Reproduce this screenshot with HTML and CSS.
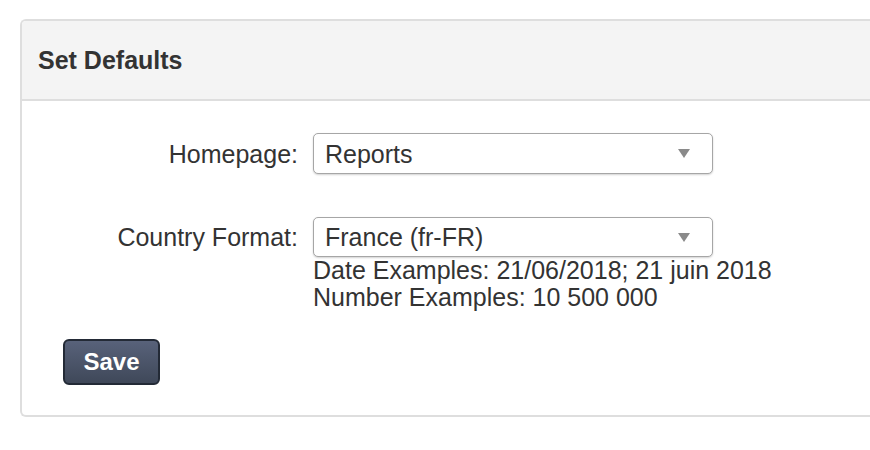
FILE: index.html
```html
<!DOCTYPE html>
<html lang="en">
<head>
<meta charset="utf-8">
<title>Set Defaults</title>
<link rel="stylesheet" href="styles.css">
</head>
<body>
<div class="panel">
  <div class="panel-header">Set Defaults</div>
  <div class="panel-body">
    <div class="field-row">
      <label class="field-label">Homepage:</label>
      <div class="select">
        <span class="select-value">Reports</span>
        <span class="select-arrow"></span>
      </div>
    </div>
    <div class="field-row field-row-spaced">
      <label class="field-label">Country Format:</label>
      <div class="select select-short">
        <span class="select-value">France (fr-FR)</span>
        <span class="select-arrow"></span>
      </div>
    </div>
    <div class="field-hint">
      <div>Date Examples: 21/06/2018; 21 juin 2018</div>
      <div>Number Examples: 10 500 000</div>
    </div>
    <button class="btn-save" type="button">Save</button>
  </div>
</div>
</body>
</html>
```

FILE: styles.css
```css
html, body {
  margin: 0;
  padding: 0;
  overflow: hidden;
  background: #ffffff;
}

body {
  font-family: "Liberation Sans", Arial, Helvetica, sans-serif;
  font-size: 25px;
  color: #333333;
  padding: 19px 0 0 20px;
}

.panel {
  border: 2px solid #dedede;
  border-right: 0;
  border-radius: 6px 0 0 6px;
  background: #ffffff;
}

.panel-header {
  height: 78px;
  display: flex;
  align-items: center;
  padding-left: 16px;
  background: #f4f4f4;
  border-bottom: 2px solid #dedede;
  border-top-left-radius: 4px;
  font-weight: bold;
  color: #333333;
}

.panel-body {
  padding: 32px 0 30px 0;
}

.field-row {
  display: grid;
  grid-template-columns: 276px 400px;
  column-gap: 15px;
  align-items: center;
}

.field-row-spaced {
  margin-top: 43px;
}

.field-label {
  text-align: right;
  line-height: 28px;
}

.select {
  box-sizing: border-box;
  height: 41px;
  display: flex;
  align-items: center;
  justify-content: space-between;
  padding: 0 22px 0 11px;
  border: 1px solid #a6a6a6;
  border-radius: 5px;
  box-shadow: 0 1px 2px rgba(0, 0, 0, 0.18);
  background: #ffffff;
}

.select-short {
  height: 40px;
}

.select-value {
  line-height: 28px;
  color: #333333;
}

.select-arrow {
  width: 0;
  height: 0;
  border-left: 6px solid transparent;
  border-right: 6px solid transparent;
  border-top: 9px solid #8a8a8a;
}

.field-hint {
  margin-left: 291px;
  line-height: 27px;
  color: #333333;
}

.btn-save {
  margin: 28px 0 0 41px;
  box-sizing: border-box;
  width: 97px;
  height: 46px;
  padding: 0;
  font-family: inherit;
  font-size: 24px;
  font-weight: bold;
  color: #ffffff;
  background: linear-gradient(#58627a, #3f4859);
  border: 2px solid #232a36;
  border-radius: 6px;
  display: block;
}
```
